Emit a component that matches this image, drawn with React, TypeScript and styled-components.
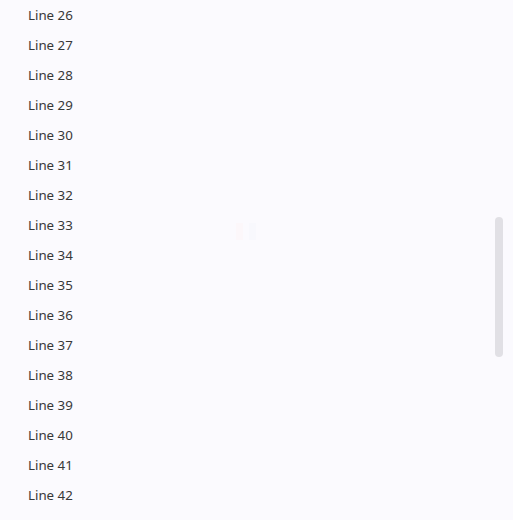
import React from "react";
import styled, { createGlobalStyle } from "styled-components";

const Global = createGlobalStyle`
  html, body { margin: 0; padding: 0; background: #fbfafe; }
  body { font-family: "Noto Sans", "Open Sans", sans-serif; }
`;

const Page = styled.div`
  position: relative;
  width: 513px;
  height: 520px;
  overflow: hidden;
  background: #fbfafe;
`;

const List = styled.ul`
  list-style: none;
  margin: 0;
  padding: 0 0 0 28px;
  display: flex;
  flex-direction: column;
`;

const Row = styled.li`
  height: 30px;
  display: flex;
  align-items: center;
  font-size: 13.3px;
  color: #383838;
`;

const Thumb = styled.div`
  position: absolute;
  left: 495px;
  top: 217px;
  width: 8px;
  height: 140px;
  border-radius: 4px;
  background: #e1e0e5;
`;

const Ghost = styled.div`
  position: absolute;
  left: 236px;
  top: 223px;
  display: flex;
  gap: 6px;
`;

const GhostBar = styled.div<{ $c: string }>`
  width: 7px;
  height: 17px;
  background: ${(p) => p.$c};
`;

export default function App() {
  const lines = Array.from({ length: 17 }, (_, i) => 26 + i);
  return (
    <Page>
      <Global />
      <List>
        {lines.map((n) => (
          <Row key={n}>Line {n}</Row>
        ))}
      </List>
      <Ghost>
        <GhostBar $c="#fcf7fa" />
        <GhostBar $c="#f8f8fd" />
      </Ghost>
      <Thumb />
    </Page>
  );
}
